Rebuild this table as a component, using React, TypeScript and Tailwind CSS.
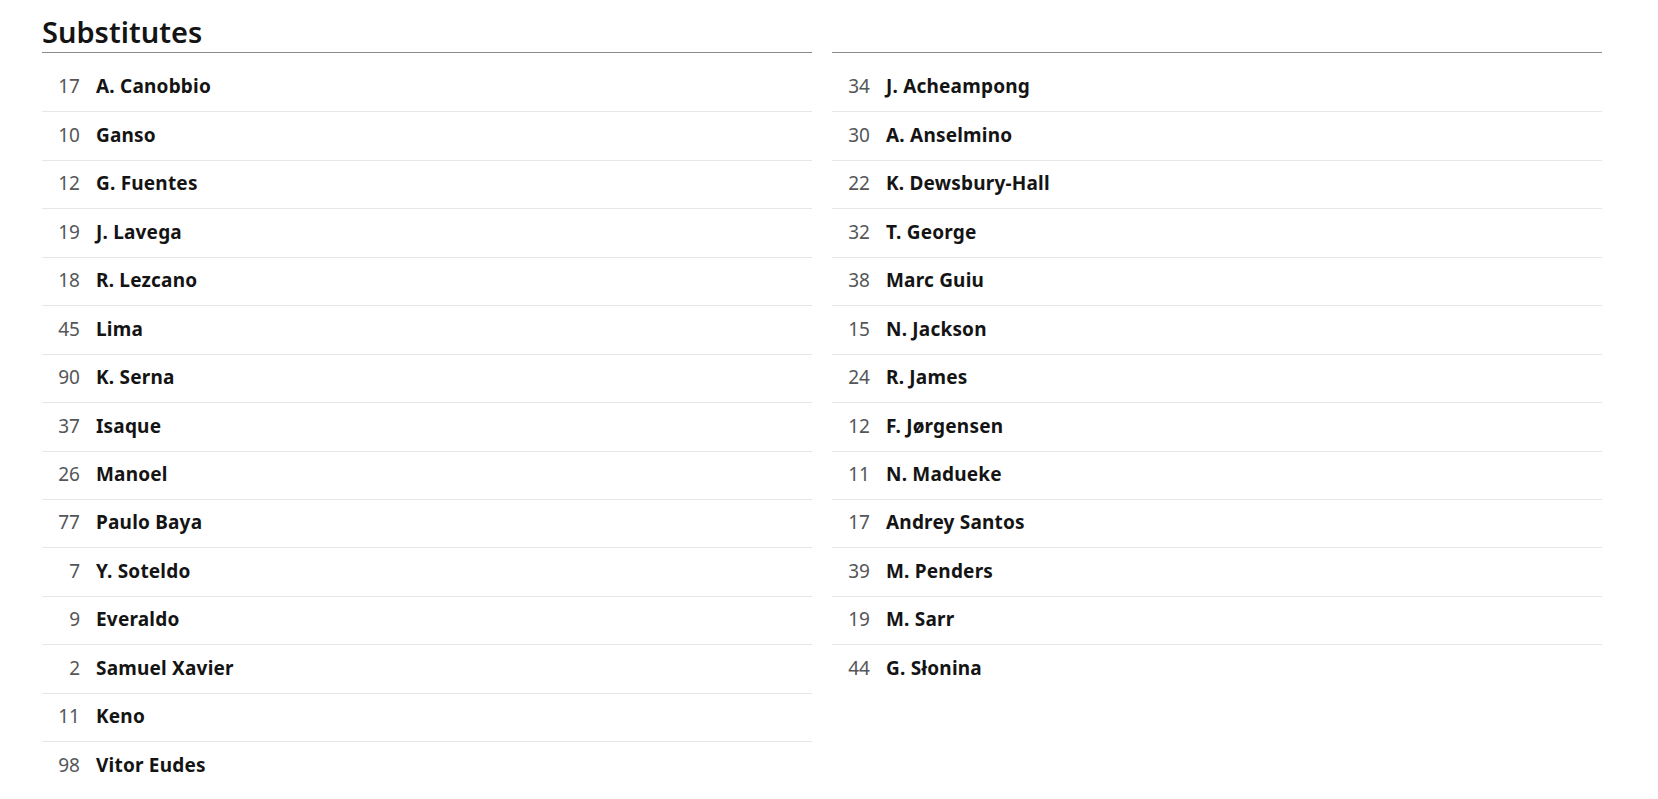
import React from "react";

const left: [string, string][] = [
  ["17", "A. Canobbio"],
  ["10", "Ganso"],
  ["12", "G. Fuentes"],
  ["19", "J. Lavega"],
  ["18", "R. Lezcano"],
  ["45", "Lima"],
  ["90", "K. Serna"],
  ["37", "Isaque"],
  ["26", "Manoel"],
  ["77", "Paulo Baya"],
  ["7", "Y. Soteldo"],
  ["9", "Everaldo"],
  ["2", "Samuel Xavier"],
  ["11", "Keno"],
  ["98", "Vitor Eudes"],
];

const right: [string, string][] = [
  ["34", "J. Acheampong"],
  ["30", "A. Anselmino"],
  ["22", "K. Dewsbury-Hall"],
  ["32", "T. George"],
  ["38", "Marc Guiu"],
  ["15", "N. Jackson"],
  ["24", "R. James"],
  ["12", "F. Jørgensen"],
  ["11", "N. Madueke"],
  ["17", "Andrey Santos"],
  ["39", "M. Penders"],
  ["19", "M. Sarr"],
  ["44", "G. Słonina"],
];

function Column({ title, rows }: { title?: string; rows: [string, string][] }) {
  return (
    <div className="w-[770px] shrink-0">
      <h2 className="h-[53px] border-b border-[#8a8a8a] pt-[16px] text-[29px] leading-[32px] font-semibold text-[#141414]">
        {title ?? "\u00a0"}
      </h2>
      <ul className="pt-[11px] divide-y divide-[#e6e6e6]">
        {rows.map(([n, name], i) => (
          <li key={i} className="flex items-center h-[48.45px] pb-[2px]">
            <span className="w-[38px] text-right text-[19px] text-[#545658]">{n}</span>
            <span className="ml-[16px] text-[19px] tracking-[0.2px] font-bold text-[#141414]">{name}</span>
          </li>
        ))}
      </ul>
    </div>
  );
}

export default function App() {
  return (
    <div
      className="min-h-[799px] bg-white pl-[42px] flex gap-[20px]"
      style={{ fontFamily: '"Noto Sans", "Open Sans", sans-serif' }}
    >
      <Column title="Substitutes" rows={left} />
      <Column rows={right} />
    </div>
  );
}
